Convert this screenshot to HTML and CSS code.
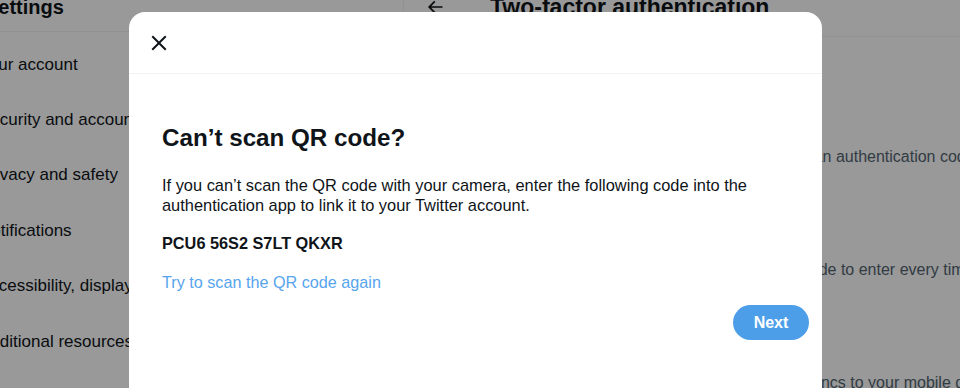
FILE: index.html
```html
<!DOCTYPE html>
<html lang="en">
<head>
<meta charset="utf-8">
<title>Two-factor authentication</title>
<link rel="stylesheet" href="styles.css">
</head>
<body>
<div class="page">
  <aside class="nav">
    <header class="nav-head"><h2>Settings</h2></header>
    <ul class="menu">
      <li>Your account</li>
      <li>Security and account access</li>
      <li>Privacy and safety</li>
      <li>Notifications</li>
      <li>Accessibility, display, and languages</li>
      <li>Additional resources</li>
    </ul>
  </aside>
  <main class="detail">
    <header class="detail-head">
      <span class="back"><svg viewBox="0 0 24 24"><path d="M7.414 13l5.043 5.04-1.414 1.42L3.586 12l7.457-7.46 1.414 1.42L7.414 11H21v2H7.414z"/></svg></span>
      <h2>Two-factor authentication</h2>
    </header>
    <div class="options">
      <div class="option sms">
        <div class="opt-title">Text message</div>
        <div class="opt-desc">Use your mobile phone to receive a text message with an authentication code to enter when you log in to Twitter.</div>
      </div>
      <div class="option app">
        <div class="opt-title">Authentication app</div>
        <div class="opt-desc">Use a mobile authentication app to get a verification code to enter every time you log in to Twitter.</div>
      </div>
      <div class="option key">
        <div class="opt-title">Security key</div>
        <div class="opt-desc">Use a security key that connects to your computer or syncs to your mobile device when you log in to Twitter.</div>
      </div>
    </div>
  </main>
</div>

<div class="overlay">
  <div class="modal" role="dialog">
    <div class="modal-head">
      <button class="close" aria-label="Close"><svg viewBox="0 0 24 24"><path d="M10.59 12L4.54 5.96l1.42-1.42L12 10.59l6.04-6.05 1.42 1.42L13.41 12l6.05 6.04-1.42 1.42L12 13.41l-6.04 6.05-1.42-1.42L10.59 12z"/></svg></button>
    </div>
    <div class="modal-body">
      <h1>Can’t scan QR code?</h1>
      <p class="desc">If you can’t scan the QR code with your camera, enter the following code into the authentication app to link it to your Twitter account.</p>
      <p class="code">PCU6 56S2 S7LT QKXR</p>
      <a class="link" href="#">Try to scan the QR code again</a>
      <div class="actions"><button class="next">Next</button></div>
    </div>
  </div>
</div>
</body>
</html>
```

FILE: styles.css
```css
* { box-sizing: border-box; }
html, body { margin: 0; height: 100%; overflow: hidden; }
body {
  font-family: "Liberation Sans", Arial, sans-serif;
  color: #0f1419;
  background: #fff;
}

.page { display: flex; width: 1100px; height: 388px; }

.nav {
  flex: 0 0 441px;
  margin-left: -37px;
  border-right: 1px solid #eff3f4;
}
.nav-head {
  height: 37px;
  border-bottom: 1px solid #eff3f4;
  padding: 0 16px 0 22px;
}
.nav-head h2 {
  margin: -5px 0 0;
  font-size: 20px;
  line-height: 24px;
  font-weight: 700;
}
.menu { list-style: none; margin: 0; padding: 5px 0 0; }
.menu li {
  height: 55.4px;
  padding: 0 16px 0 16px;
  display: flex;
  align-items: center;
  font-size: 17px;
  line-height: 20px;
  white-space: nowrap;
  overflow: hidden;
}

.detail { flex: 0 0 640px; }
.detail-head {
  height: 37px;
  border-bottom: 1px solid #eff3f4;
  display: flex;
  align-items: flex-start;
  padding: 0 0 0 21px;
}
.back { width: 20px; height: 20px; margin-top: -3px; display: block; }
.back svg { width: 20px; height: 20px; fill: #0f1419; display: block; }
.detail-head h2 {
  margin: -7px 0 0 45px;
  font-size: 23px;
  line-height: 28px;
  font-weight: 700;
  white-space: nowrap;
}
.options { padding-top: 77.5px; }
.option { height: 113px; padding: 12px 0 0 26px; }
.option.sms { padding-left: 21px; }
.option.key { padding-left: 23px; }
.opt-title { font-size: 16px; line-height: 20px; font-weight: 700; }
.opt-desc { font-size: 16px; line-height: 20px; color: #536471; white-space: nowrap; }

.overlay {
  position: fixed;
  inset: 0;
  background: rgba(0, 0, 0, 0.4);
  display: flex;
  align-items: flex-start;
  padding: 12px 0 0 129px;
}
.modal {
  flex: 0 0 693px;
  height: 420px;
  background: #fff;
  border-radius: 16px;
}
.modal-head {
  height: 62px;
  border-bottom: 1px solid #eff3f4;
  display: flex;
  align-items: center;
  padding: 0 12px;
}
.close {
  width: 36px;
  height: 36px;
  border: 0;
  padding: 0;
  background: none;
  display: flex;
  align-items: center;
  justify-content: center;
  border-radius: 50%;
}
.close svg { width: 24px; height: 24px; fill: #0f1419; display: block; }

.modal-body {
  padding: 50px 13px 0 33px;
  display: flex;
  flex-direction: column;
}
.modal-body h1 {
  margin: 0 0 23px;
  font-size: 24.2px;
  line-height: 28px;
  font-weight: 700;
}
.desc { margin: 0 0 18px; font-size: 16.4px; line-height: 20px; }
.code { margin: 0 0 19px; font-size: 16.3px; line-height: 20px; font-weight: 700; }
.link {
  align-self: flex-start;
  font-size: 16.2px;
  line-height: 20px;
  color: #57a5ec;
  text-decoration: none;
}
.actions { display: flex; justify-content: flex-end; margin-top: 13px; }
.next {
  width: 76px;
  height: 35px;
  border: 0;
  border-radius: 999px;
  background: #4d9ee9;
  color: #fff;
  font-family: inherit;
  font-size: 16px;
  font-weight: 700;
  padding: 0;
}
```
